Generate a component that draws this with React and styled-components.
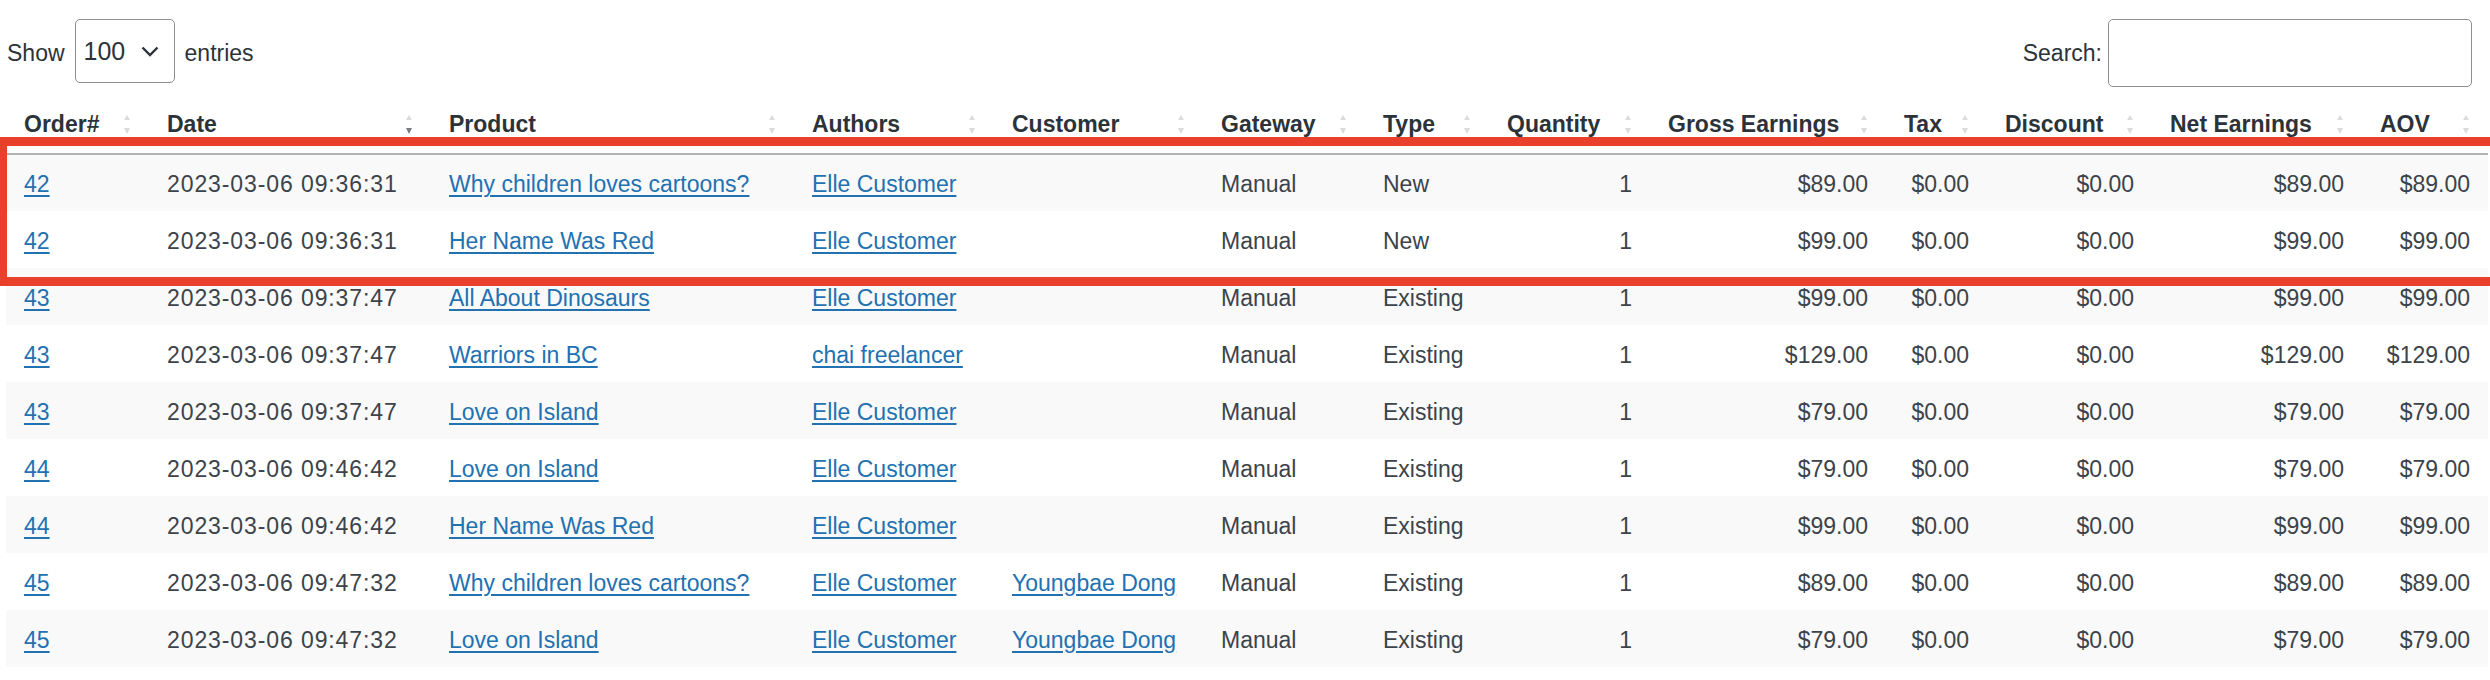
import React from 'react';
import styled, { createGlobalStyle } from 'styled-components';

const GlobalStyle = createGlobalStyle`
  html, body {
    margin: 0;
    padding: 0;
    background: #fff;
    overflow: hidden;
  }
  body {
    font-family: "Liberation Sans", Arial, sans-serif;
    color: #3c434a;
  }
`;

const Page = styled.div`
  position: relative;
  width: 2490px;
  height: 680px;
  overflow: hidden;
`;

const Controls = styled.div`
  display: flex;
  justify-content: space-between;
  align-items: center;
  height: 68px;
  padding: 19px 18px 0 7px;
`;

const Label = styled.label`
  display: flex;
  align-items: center;
  gap: ${props => props.$gap || '10px'};
  font-size: 23px;
  color: #2c3338;
`;

const SelectBox = styled.div`
  box-sizing: border-box;
  width: 100px;
  height: 64px;
  display: flex;
  align-items: center;
  justify-content: space-between;
  padding: 0 15px 0 8px;
  border: 1.5px solid #8c8f94;
  border-radius: 5px;
  font-size: 25px;
  color: #2c3338;
  margin-top: -4px;
`;

const SearchInput = styled.input`
  box-sizing: border-box;
  width: 364px;
  height: 68px;
  border: 1.5px solid #8c8f94;
  border-radius: 5px;
  font-size: 23px;
  outline: none;
`;

const Table = styled.table`
  margin: 7px 0 0 6px;
  width: 2482px;
  table-layout: fixed;
  border-collapse: collapse;
  border-spacing: 0;
`;

const HeadCell = styled.th`
  height: 59px;
  padding: 0 0 0 18px;
  text-align: left;
  font-size: 23px;
  font-weight: 700;
  color: #2c3338;
  border-bottom: 2px solid #b3b3b3;
  white-space: nowrap;
`;

const HeadInner = styled.div`
  display: flex;
  align-items: center;
  justify-content: space-between;
  padding-right: 19px;
  margin-top: 2px;
`;

const SortIcon = styled.svg`
  width: 6px;
  height: 20px;
  flex: none;
`;

const Row = styled.tr`
  background: ${props => (props.$striped ? '#f9f9f9' : '#fff')};
`;

const Cell = styled.td`
  box-sizing: border-box;
  height: 57px;
  padding: 3px 18px 0;
  font-size: 23px;
  color: #3c434a;
  white-space: nowrap;
  overflow: hidden;
  text-align: ${props => (props.$right ? 'right' : 'left')};
  letter-spacing: ${props => props.$spacing || 'normal'};
`;

const Link = styled.a`
  color: #2271b1;
  text-decoration: underline;
  text-underline-offset: 3px;
  text-decoration-thickness: 1.5px;
`;

const Highlight = styled.div`
  position: absolute;
  left: 0;
  right: -20px;
  top: 137px;
  height: 131px;
  border: 9px solid #e8402a;
  border-left-width: 7px;
  pointer-events: none;
`;

const Chevron = () => (
  <svg width="18" height="11" viewBox="0 0 18 11">
    <path d="M1.5 1.5 L9 9 L16.5 1.5" fill="none" stroke="#2c3338" strokeWidth="2.4" />
  </svg>
);

const Sort = ({ active }) => (
  <SortIcon viewBox="0 0 6 20">
    <path d="M3 0 L6 5 L0 5 Z" fill="#dcdcde" />
    <path d="M0 13 L6 13 L3 19 Z" fill={active ? '#787c82' : '#dcdcde'} />
  </SortIcon>
);

const columns = [
  { label: 'Order#', width: 143 },
  { label: 'Date', width: 282, active: true },
  { label: 'Product', width: 363 },
  { label: 'Authors', width: 200 },
  { label: 'Customer', width: 209 },
  { label: 'Gateway', width: 162 },
  { label: 'Type', width: 124 },
  { label: 'Quantity', width: 161 },
  { label: 'Gross Earnings', width: 236 },
  { label: 'Tax', width: 101 },
  { label: 'Discount', width: 165 },
  { label: 'Net Earnings', width: 210 },
  { label: 'AOV', width: 126 },
];

const rows = [
  ['42', '2023-03-06 09:36:31', 'Why children loves cartoons?', 'Elle Customer', '', 'New', '$89.00'],
  ['42', '2023-03-06 09:36:31', 'Her Name Was Red', 'Elle Customer', '', 'New', '$99.00'],
  ['43', '2023-03-06 09:37:47', 'All About Dinosaurs', 'Elle Customer', '', 'Existing', '$99.00'],
  ['43', '2023-03-06 09:37:47', 'Warriors in BC', 'chai freelancer', '', 'Existing', '$129.00'],
  ['43', '2023-03-06 09:37:47', 'Love on Island', 'Elle Customer', '', 'Existing', '$79.00'],
  ['44', '2023-03-06 09:46:42', 'Love on Island', 'Elle Customer', '', 'Existing', '$79.00'],
  ['44', '2023-03-06 09:46:42', 'Her Name Was Red', 'Elle Customer', '', 'Existing', '$99.00'],
  ['45', '2023-03-06 09:47:32', 'Why children loves cartoons?', 'Elle Customer', 'Youngbae Dong', 'Existing', '$89.00'],
  ['45', '2023-03-06 09:47:32', 'Love on Island', 'Elle Customer', 'Youngbae Dong', 'Existing', '$79.00'],
];

export default function App() {
  return (
    <Page>
      <GlobalStyle />
      <Controls>
        <Label>
          Show
          <SelectBox>
            100
            <Chevron />
          </SelectBox>
          entries
        </Label>
        <Label $gap="6px">
          Search:
          <SearchInput type="search" />
        </Label>
      </Controls>
      <Table>
        <colgroup>
          {columns.map(c => (
            <col key={c.label} style={{ width: c.width }} />
          ))}
        </colgroup>
        <thead>
          <tr>
            {columns.map(c => (
              <HeadCell key={c.label}>
                <HeadInner>
                  {c.label}
                  <Sort active={c.active} />
                </HeadInner>
              </HeadCell>
            ))}
          </tr>
        </thead>
        <tbody>
          {rows.map((r, i) => {
            const [order, date, product, author, customer, type, price] = r;
            return (
              <Row key={i} $striped={i % 2 === 0}>
                <Cell><Link href="#">{order}</Link></Cell>
                <Cell $spacing="0.9px">{date}</Cell>
                <Cell><Link href="#">{product}</Link></Cell>
                <Cell><Link href="#">{author}</Link></Cell>
                <Cell>{customer && <Link href="#">{customer}</Link>}</Cell>
                <Cell>Manual</Cell>
                <Cell>{type}</Cell>
                <Cell $right>1</Cell>
                <Cell $right>{price}</Cell>
                <Cell $right>$0.00</Cell>
                <Cell $right>$0.00</Cell>
                <Cell $right>{price}</Cell>
                <Cell $right>{price}</Cell>
              </Row>
            );
          })}
        </tbody>
      </Table>
      <Highlight />
    </Page>
  );
}
